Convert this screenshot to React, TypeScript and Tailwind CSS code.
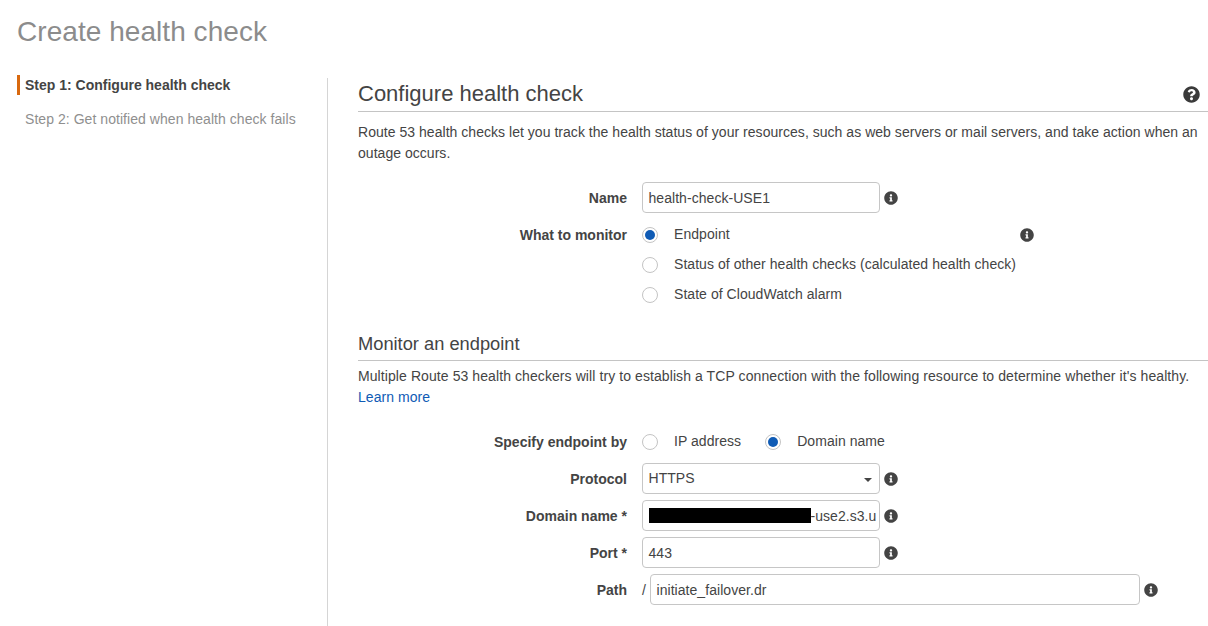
import { FaInfoCircle, FaQuestionCircle } from "react-icons/fa";
import type { ReactNode } from "react";

function Info({ className = "" }: { className?: string }) {
	return <FaInfoCircle className={`size-[14px] shrink-0 text-[#444] ${className}`} />;
}

function Radio({ checked = false }: { checked?: boolean }) {
	return (
		<span className="flex size-4 shrink-0 items-center justify-center rounded-full border border-[#c4c4c4] bg-white">
			{checked && <span className="size-[10px] rounded-full bg-[#0f5bb5]" />}
		</span>
	);
}

function Row({ label, children, className = "" }: { label: string; children: ReactNode; className?: string }) {
	return (
		<div className={`flex items-center ${className}`}>
			<div className="w-[269px] shrink-0 text-right font-bold tracking-normal text-[#444]">{label}</div>
			<div className="ml-[15px] flex items-center">{children}</div>
		</div>
	);
}

function TextBox({ children, className = "w-[238px]" }: { children: ReactNode; className?: string }) {
	return (
		<div className={`relative flex h-[31px] items-center overflow-hidden rounded-[4px] border border-[#c6c6c6] bg-white pl-[5.5px] text-[#444] ${className}`}>
			{children}
		</div>
	);
}

function RadioOption({ label, checked = false }: { label: string; checked?: boolean }) {
	return (
		<div className="flex h-[30px] items-center">
			<Radio checked={checked} />
			<span className="ml-4 pb-[2px] text-[#444]">{label}</span>
		</div>
	);
}

export default function App() {
	return (
		<div className="h-[626px] w-[1208px] overflow-hidden bg-white font-['Liberation_Sans',Arial,sans-serif] text-sm tracking-[0.05px] text-[#444]">
			<h1 className="pl-[17px] pt-[15px] text-[28px] leading-[34px] text-[#8c8c8c]">Create health check</h1>
			<div className="mt-[29px] flex">
				<div className="h-[548px] w-[328px] shrink-0 border-r border-[#d5d5d5]">
					<div className="-mt-[3px] ml-[17px] flex h-5 items-center border-l-[3px] border-[#d9690f] pl-[5px] font-bold tracking-normal text-[#444]">
						Step 1: Configure health check
					</div>
					<div className="ml-[25px] mt-[14px] text-[#8f8f8f]">Step 2: Get notified when health check fails</div>
				</div>
				<div className="ml-[30px] min-w-0 flex-1">
					<div className="flex h-[34px] items-center justify-between border-b border-[#c4c4c4] pr-2">
						<h2 className="pb-[2px] text-[22px] tracking-normal text-[#444]">Configure health check</h2>
						<FaQuestionCircle className="size-[17px] text-[#3a3a3a]" />
					</div>
					<p className="mt-[10px] leading-[21px] tracking-[0.035px]">
						Route 53 health checks let you track the health status of your resources, such as web servers or mail servers, and take action when an outage occurs.
					</p>
					<Row label="Name" className="mt-[18px]">
						<TextBox>health-check-USE1</TextBox>
						<Info className="ml-[4px]" />
					</Row>
					<div className="mt-[7px] flex items-start">
						<div className="flex h-[30px] w-[269px] shrink-0 items-center justify-end font-bold tracking-normal text-[#444]">What to monitor</div>
						<div className="relative ml-[15px] flex-1">
							<RadioOption label="Endpoint" checked />
							<RadioOption label="Status of other health checks (calculated health check)" />
							<RadioOption label="State of CloudWatch alarm" />
							<Info className="absolute left-[378px] top-[8px]" />
						</div>
					</div>
					<h3 className="mt-[23px] border-b border-[#c4c4c4] pb-[5px] text-[18.3px] leading-[22px] tracking-normal text-[#444]">Monitor an endpoint</h3>
					<p className="mt-[5px] leading-[21px] tracking-[0.085px]">
						Multiple Route 53 health checkers will try to establish a TCP connection with the following resource to determine whether it's healthy.
					</p>
					<a className="block leading-[21px] text-[#0f5bb5]">Learn more</a>
					<Row label="Specify endpoint by" className="mt-[19px] h-[30px]">
						<RadioOption label="IP address" />
						<div className="ml-6">
							<RadioOption label="Domain name" checked />
						</div>
					</Row>
					<div className="mt-[6px] flex flex-col gap-[6px]">
						<Row label="Protocol">
							<TextBox>
								<span className="pb-[2px]">HTTPS</span>
								<span className="absolute right-[7px] top-[14px] border-x-[4px] border-t-[4px] border-x-transparent border-t-[#444]" />
							</TextBox>
							<Info className="ml-[4px]" />
						</Row>
						<Row label="Domain name *">
							<TextBox>
								<span className="h-[15px] w-[162px] shrink-0 bg-black" />
								<span className="whitespace-nowrap">-use2.s3.u</span>
							</TextBox>
							<Info className="ml-[4px]" />
						</Row>
						<Row label="Port *">
							<TextBox>443</TextBox>
							<Info className="ml-[4px]" />
						</Row>
						<Row label="Path">
							<span className="w-2 text-[#444]">/</span>
							<TextBox className="w-[490px]">initiate_failover.dr</TextBox>
							<Info className="ml-[4px]" />
						</Row>
					</div>
				</div>
			</div>
		</div>
	);
}
